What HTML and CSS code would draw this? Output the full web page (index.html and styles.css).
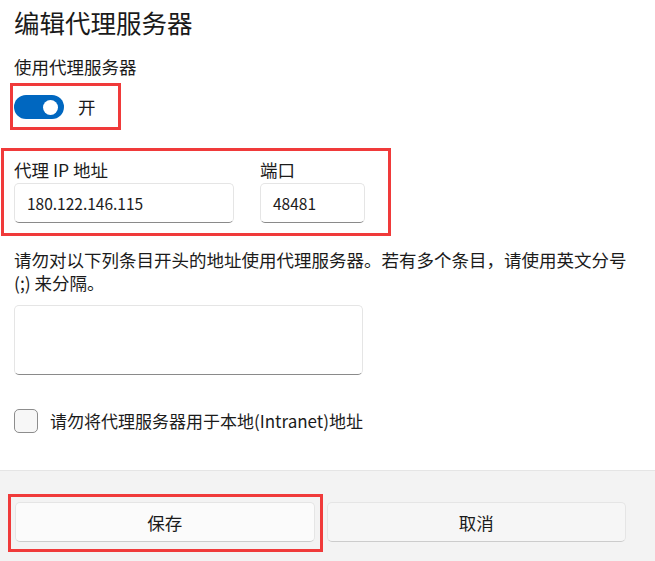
FILE: index.html
```html
<!DOCTYPE html>
<html lang="zh-CN">
<head>
<meta charset="utf-8">
<title>编辑代理服务器</title>
<link rel="stylesheet" href="styles.css">
</head>
<body>
<div class="page">
  <main class="content">
    <h1 class="title">编辑代理服务器</h1>
    <div class="label">使用代理服务器</div>
    <div class="hl toggle-box">
      <span class="toggle"><span class="knob"></span></span>
      <span class="toggle-text">开</span>
    </div>
    <div class="hl fields-box">
      <div class="field field-ip">
        <div class="label">代理 IP 地址</div>
        <div class="input">180.122.146.115</div>
      </div>
      <div class="field field-port">
        <div class="label">端口</div>
        <div class="input">48481</div>
      </div>
    </div>
    <p class="desc">请勿对以下列条目开头的地址使用代理服务器。若有多个条目，请使用英文分号<br>(;) 来分隔。</p>
    <div class="textarea"></div>
    <div class="check-row">
      <span class="checkbox"></span>
      <span class="check-label">请勿将代理服务器用于本地(Intranet)地址</span>
    </div>
  </main>
  <footer class="footer">
    <div class="hl save-box"><button class="btn btn-save">保存</button></div>
    <button class="btn btn-cancel">取消</button>
  </footer>
</div>
</body>
</html>
```
FILE: styles.css
```css
* { box-sizing: border-box; }
html, body { margin: 0; padding: 0; }
body {
  background: #ffffff;
  color: #1b1b1b;
  font-family: "Noto Sans CJK SC", "Noto Sans", sans-serif;
  font-size: 17.5px;
}
.page {
  height: 561px;
  display: flex;
  flex-direction: column;
  overflow: hidden;
}
.content {
  padding: 0 14px;
  display: flex;
  flex-direction: column;
  align-items: flex-start;
}
.title {
  margin: 4px 0 0;
  font-size: 25.5px;
  font-weight: 400;
  line-height: 36px;
  color: #1a1a1a;
}
.label {
  line-height: 24px;
}
.content > .label { margin-top: 15px; }
.hl { border: 3px solid #f03a3a; }
.toggle-box {
  margin-top: 4px;
  margin-left: -4px;
  width: 111px;
  padding: 9px 0 8px 1px;
  display: flex;
  align-items: center;
  gap: 14px;
  line-height: 24px;
}
.toggle {
  width: 50px;
  height: 24px;
  border-radius: 12px;
  background: #0067c0;
  display: flex;
  align-items: center;
  justify-content: flex-end;
  padding-right: 6px;
}
.knob {
  width: 15px;
  height: 15px;
  border-radius: 50%;
  background: #ffffff;
}
.fields-box {
  margin-top: 18px;
  margin-left: -13px;
  width: 390px;
  padding: 7px 0 10px 10px;
  display: flex;
  gap: 26px;
}
.field-ip { width: 220px; }
.field-port { width: 105px; }
.input {
  margin-top: 1px;
  height: 40px;
  border: 1px solid #e5e5e5;
  border-bottom-color: #8a8a8a;
  border-radius: 5px;
  background: #ffffff;
  padding: 0 12px;
  display: flex;
  align-items: center;
  font-size: 15.5px;
  color: #1b1b1b;
}
.desc {
  margin: 12px 0 0;
  font-size: 17.5px;
  line-height: 23px;
  white-space: nowrap;
}
.textarea {
  margin-top: 11px;
  width: 349px;
  height: 70px;
  border: 1px solid #e5e5e5;
  border-bottom-color: #8a8a8a;
  border-radius: 5px;
  background: #ffffff;
}
.check-row {
  margin-top: 34px;
  display: flex;
  align-items: center;
  gap: 12px;
  line-height: 24px;
}
.checkbox {
  width: 24px;
  height: 24px;
  border: 1px solid #8d8d8d;
  border-radius: 5px;
  background: #f7f7f7;
}
.check-label { font-size: 17px; }
.footer {
  margin-top: auto;
  background: #f3f3f3;
  border-top: 1px solid #e5e5e5;
  padding: 31px 29px 19px 15px;
  display: grid;
  grid-template-columns: 1fr 1fr;
  gap: 12px;
}
.save-box {
  margin: -8px -8px -10px -7px;
  padding: 5px 5px 7px 4px;
}
.btn {
  width: 100%;
  height: 40px;
  border: 1px solid #e5e5e5;
  border-bottom-color: #cccccc;
  border-radius: 5px;
  font-family: inherit;
  font-size: 17.5px;
  color: #1b1b1b;
  display: block;
  padding: 0;
}
.btn-save { background: #fbfbfb; }
.btn-cancel { background: #f6f6f6; }
```
